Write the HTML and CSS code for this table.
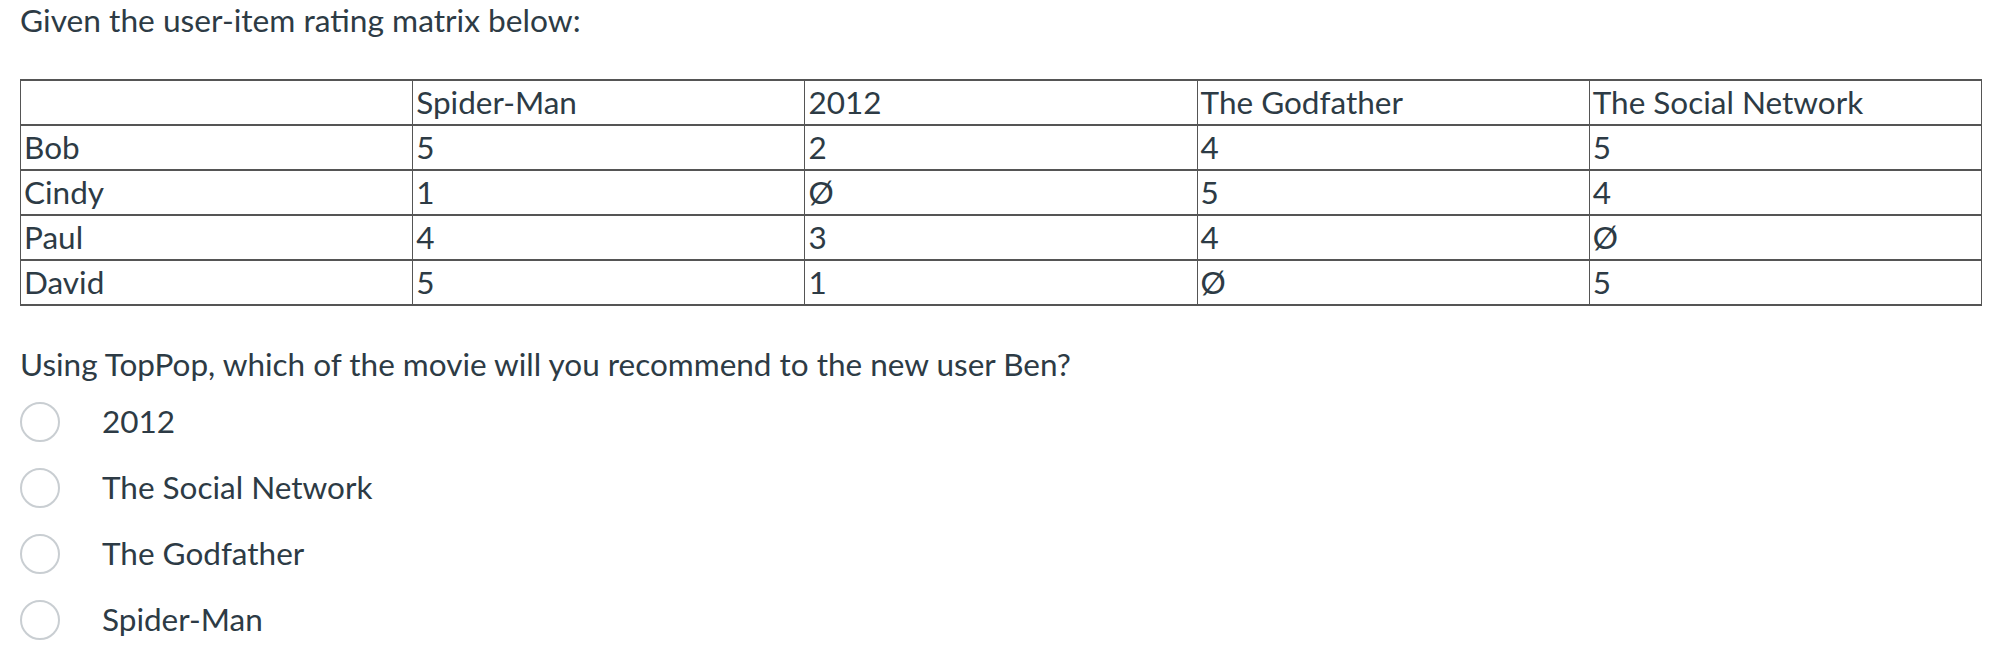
FILE: index.html
```html
<!DOCTYPE html>
<html>
<head>
<meta charset="utf-8">
<link rel="stylesheet" href="styles.css">
</head>
<body>
<div class="page">
  <p class="intro">Given the user-item rating matrix below:</p>
  <table class="matrix">
    <tr><td></td><td>Spider-Man</td><td>2012</td><td>The Godfather</td><td>The Social Network</td></tr>
    <tr><td>Bob</td><td>5</td><td>2</td><td>4</td><td>5</td></tr>
    <tr><td>Cindy</td><td>1</td><td>Ø</td><td>5</td><td>4</td></tr>
    <tr><td>Paul</td><td>4</td><td>3</td><td>4</td><td>Ø</td></tr>
    <tr><td>David</td><td>5</td><td>1</td><td>Ø</td><td>5</td></tr>
  </table>
  <p class="question">Using TopPop, which of the movie will you recommend to the new user Ben?</p>
  <div class="options">
    <label class="option"><span class="radio"></span><span class="label">2012</span></label>
    <label class="option"><span class="radio"></span><span class="label">The Social Network</span></label>
    <label class="option"><span class="radio"></span><span class="label">The Godfather</span></label>
    <label class="option"><span class="radio"></span><span class="label">Spider-Man</span></label>
  </div>
</div>
</body>
</html>
```
FILE: styles.css
```css
html, body {
  margin: 0;
  padding: 0;
  background: #ffffff;
}
.page {
  padding: 1px 24px 0 20px;
  font-family: Lato, "Liberation Sans", sans-serif;
  font-size: 31.5px;
  line-height: 1.2;
  color: #2d3b45;
}
.intro {
  margin: 0;
  font-size: 31.7px;
}
.matrix {
  margin-top: 40px;
  width: 1962px;
  table-layout: fixed;
  border-collapse: collapse;
  font-size: 31.5px;
  line-height: 1.2;
  color: #2d3b45;
}
.matrix tr {
  height: 45px;
}
.matrix td {
  border: 1px solid #555555;
  border-top-width: 2px;
  border-bottom-width: 2px;
  padding: 0 3px;
  vertical-align: middle;
  white-space: nowrap;
}
.question {
  margin: 40px 0 0;
}
.options {
  display: flex;
  flex-direction: column;
  margin-top: 5px;
}
.option {
  display: flex;
  align-items: center;
  height: 66px;
  gap: 42px;
}
.radio {
  width: 40px;
  height: 40px;
  box-sizing: border-box;
  border: 2px solid #c9ced2;
  border-radius: 50%;
  flex: none;
  background: #fff;
}
```
